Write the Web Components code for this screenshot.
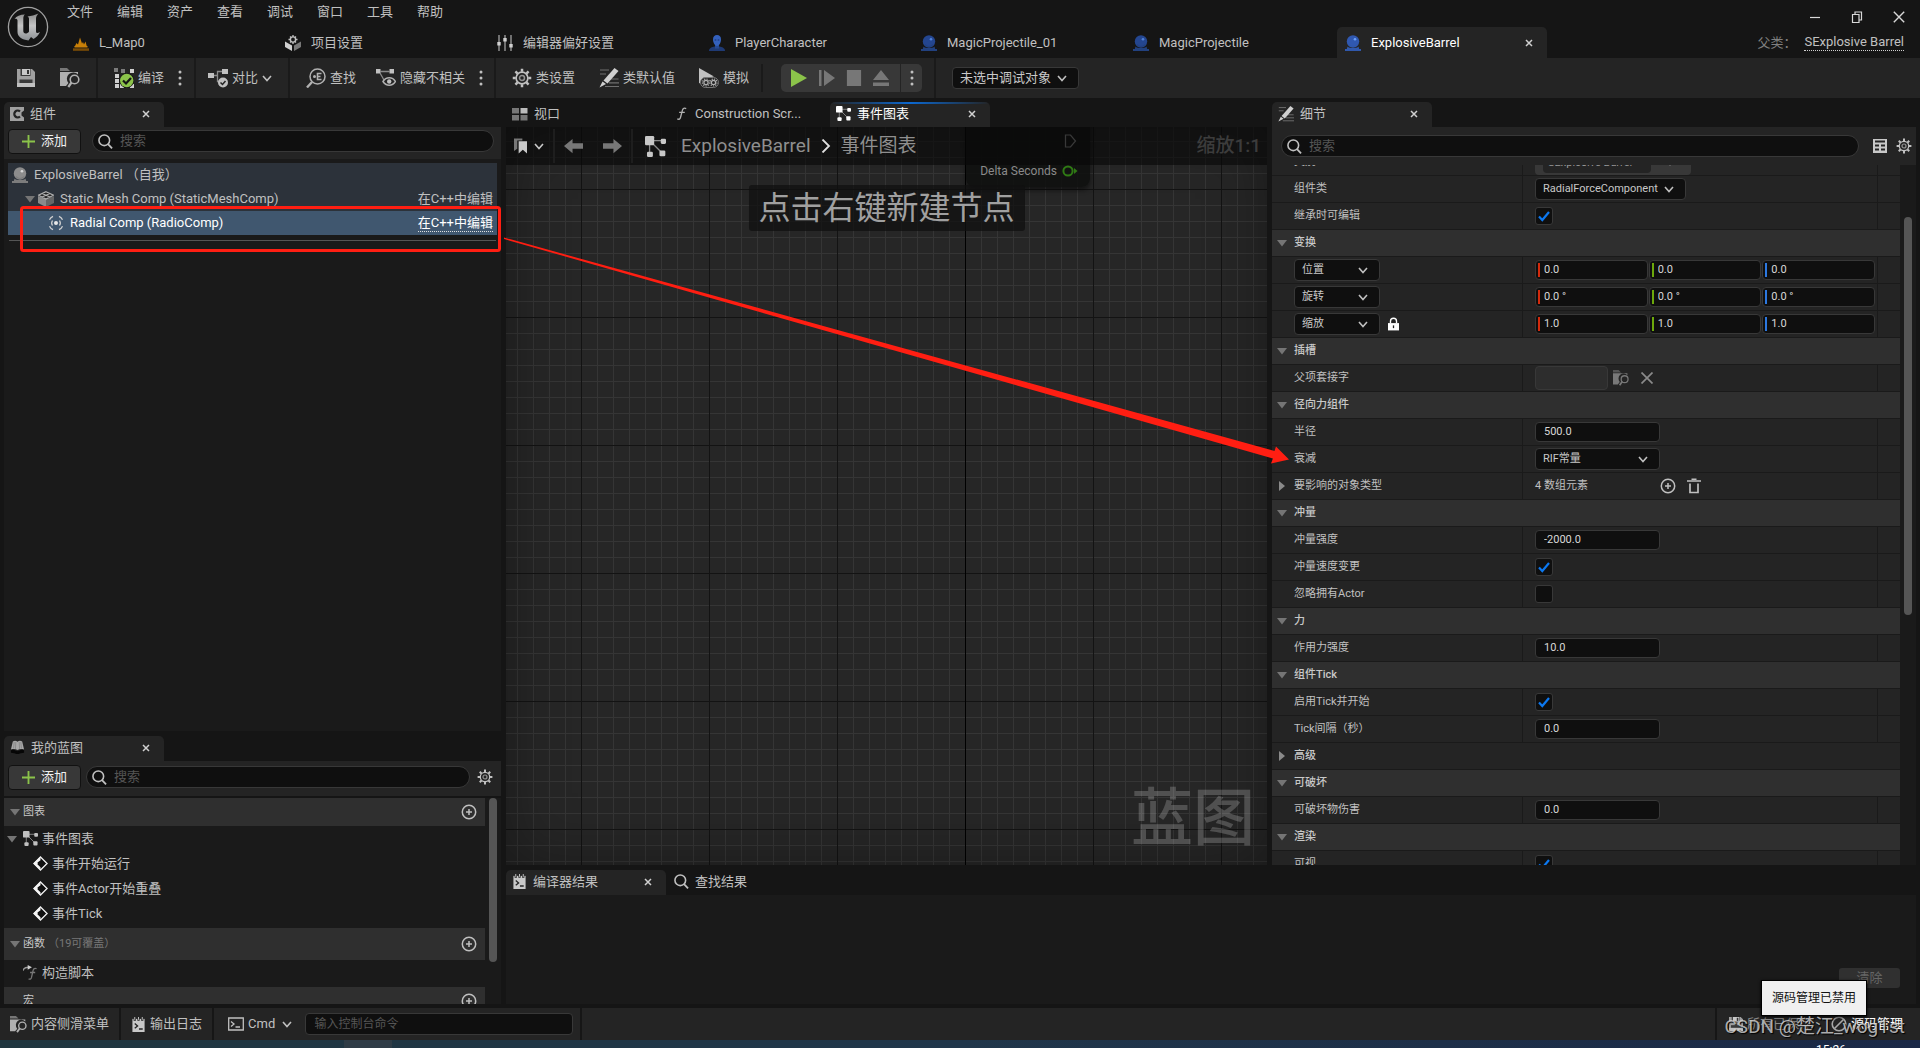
<!DOCTYPE html>
<html lang="zh-CN">
<head>
<meta charset="utf-8">
<title>ExplosiveBarrel</title>
<style>
html,body{margin:0;height:100%}
body{background:#151515;color:#c0c0c0;font:13px/20px Roboto,"Noto Sans CJK SC",sans-serif;overflow:hidden}
</style>
</head>
<body>
<ue-editor></ue-editor>
<script>
const BASE = `*{box-sizing:border-box}
:host{display:block;box-sizing:border-box}
:host([hidden]){display:none}
button,input,select{font:inherit;color:inherit;margin:0;padding:0;border:0;background:none;border-radius:0;outline:0;text-align:left}
button{display:inline-flex;align-items:center;white-space:nowrap}
a{color:inherit;text-decoration:none}
ue-icon{flex:none}`;

const gear = (c='currentColor') => `<g fill="none" stroke="${c}"><circle cx="8" cy="8" r="4.7" stroke-width="1.3"/><circle cx="8" cy="8" r="2" stroke-width="1.2" opacity=".7"/><g stroke-width="2">${[0,45,90,135,180,225,270,315].map(a=>`<path d="M8 .6V3" transform="rotate(${a} 8 8)"/>`).join('')}</g></g>`;
const orb = (a,b,c) => `<path d="M2.500 11.500C4 13.500 12 13.500 13.500 11.500l.8 3H1.700z" fill="${a}"/><path d="M0 14h16v2H0z" fill="${a}"/><circle cx="8" cy="6.500" r="6.200" fill="${b}"/><path d="M4 9.500a5 5 0 0 0 8 0" fill="none" stroke="${a}" stroke-width="1.200"/><circle cx="10" cy="4.300" r="1.300" fill="${c}"/>`;
const ICONS = {
  logo:['0 0 42 42','<defs><linearGradient id="m" x1="0" y1="0" x2="0" y2="1"><stop offset="0" stop-color="#8c8c8c"/><stop offset=".45" stop-color="#c4c4c4"/><stop offset="1" stop-color="#8c9094"/></linearGradient></defs><circle cx="21" cy="21" r="19.600" fill="#141414" stroke="#a0a0a0" stroke-width="1.300"/><path d="M7.500 13C9.500 10 13 8.500 18 8.500 16.500 9.500 16.300 11 16.300 13V25c0 2 1.700 3.300 4.200 2 1-.5 1.500-1 1.500-2V13c0-1.500-.5-2-1.500-2.500C24 10 28 9 31.500 7.500 29.500 9.500 29 11 29 13V25c0 2.500 1.500 2.500 4 1-1.500 3.500-4 5.500-6.500 7L24 31l-2.500 3.500C15 33.500 10.500 31 10.500 26V14.500C10.500 13 9 12.500 7.500 13z" fill="url(#m)"/>'],
  map:['0 0 16 16','<path d="M1.500 12L3.500 8l1.500 1.500L7 2.500l2 6 1-1.500 1 2.500 1.500-3L14 12z" fill="#c98008"/><path d="M1.500 11h13v1.500h-13z" fill="#c98008"/><path d="M0 13.300h16V15.800H0z" fill="#7a4c06"/>'],
  project:['0 0 16 16','<path d="M0 6.500l7 4V16L0 12z" fill="#d0d0d0"/><path d="M16 6.500l-7 4V16l7-4z" fill="#777"/><circle cx="8" cy="4.500" r="2.600" fill="none" stroke="#c0c0c0" stroke-width="1.400"/><path d="M8 0v2M8 7v2M3.500 4.500h2M10.500 4.500h2M5 1.500l1 1M11 1.500l-1 1M5 7.500l1-1M11 7.500l-1-1" stroke="#c0c0c0" stroke-width="1.300"/>'],
  sliders:['0 0 16 16','<path d="M2 0v16M8 0v16M14 0v16" stroke="#a0a0a0" stroke-width="1.300"/><path d="M.3 7h3.400v3.500H.3zM6.300 3h3.400v3.500H6.300zM12.300 9h3.400v3.500h-3.400z" fill="#d0d0d0"/>'],
  person:['0 0 16 16','<path d="M0 16c0-3 3-4 5.500-4.500h5C13 12 16 13 16 16z" fill="#1f3a74"/><path d="M6 9h4v4.500H6z" fill="#264a95"/><path d="M4 4.500C4 1.500 5.500 0 8 0s4 1.500 4 4.500S10 11 8 11 4 7.500 4 4.500z" fill="#3461bd"/><path d="M5.700 5h1.600M8.700 5h1.600" stroke="#16306a" stroke-width="1"/>'],
  orb:['0 0 16 16',orb('#22417f','#244690','#4f7fd6')],
  orbOn:['0 0 16 16',orb('#3058ac','#3058b0','#6c9ff8')],
  orbGray:['0 0 16 16',orb('#7c7c7c','#8c8c8c','#d8d8d8')],
  save:['0 0 18 18','<path d="M0 0h15l3 3v15H0z" fill="#a0a0a0"/><path d="M3.500 0h10v7h-10z" fill="#3a3a3a"/><path d="M5 0h8v6H5z" fill="#c8c8c8"/><path d="M10 1h2v4h-2z" fill="#333"/><path d="M2.500 10.500h13v3.500h-13z" fill="#3a3a3a"/><path d="M0 14h18v4H0z" fill="#c0c0c0"/>'],
  browse:['0 0 20 20','<path d="M0 0h7l3 3H0z" fill="#777"/><path d="M0 4h18v2.500a6 6 0 0 0-9.500 8.500l-2.500 3H0z" fill="#b0b0b0"/><circle cx="14.500" cy="11.500" r="4.300" fill="#242424" stroke="#b0b0b0" stroke-width="1.600"/><path d="M11.500 14.500L8.300 19" stroke="#b0b0b0" stroke-width="2.200"/>'],
  compile:['0 0 20 20','<g fill="#7b7b7b"><path d="M0 0h4v4H0zM7 1h4v4H7z"/></g><g fill="#cfcfcf"><path d="M16 1h4v4h-4zM1 6h4v4H1zM1 11h4v4H1zM1 16h4v4H1zM6 16h4v4H6zM16 16h4v4h-4z"/></g><circle cx="12.700" cy="12.500" r="7.400" fill="#151515"/><circle cx="12.700" cy="12.500" r="6.700" fill="#8bc34a"/><path d="M9 12.500l3 3 5-5.500" fill="none" stroke="#151515" stroke-width="2.200"/>'],
  diff:['0 0 20 20','<path d="M0 5h6v5H0zM14 1h6v5h-6z" fill="#c0c0c0"/><path d="M6 7.500h3.500V3.500H14M9.500 7.500v6H11" fill="none" stroke="#8a8a8a" stroke-width="1.300"/><circle cx="15" cy="14.500" r="5" fill="#c0c0c0"/><path d="M12.500 14.500l2 2 3-3.500" fill="none" stroke="#242424" stroke-width="1.500"/>'],
  find:['0 0 20 20','<circle cx="11.500" cy="8.500" r="7.500" fill="none" stroke="#b0b0b0" stroke-width="1.500"/><path d="M6 14L1 19.500" stroke="#b0b0b0" stroke-width="2.400"/><circle cx="8.500" cy="8.500" r="1.500" fill="#b0b0b0"/><path d="M15.500 5.500h-4v6h4M11.500 8.500h3" fill="none" stroke="#b0b0b0" stroke-width="1.600"/>'],
  hide:['0 0 20 20','<path d="M0 1h4.500v4.500H0zM13.500 1H18v4.500h-4.500z" fill="#c0c0c0"/><path d="M4 3.500h10M4 5l4 7" stroke="#8a8a8a" stroke-width="1.300"/><path d="M7 13.500c3-5 9.500-5 12.500 0-3 5-9.500 5-12.500 0z" fill="#242424" stroke="#b0b0b0" stroke-width="1.500"/><circle cx="13.200" cy="13.500" r="2.200" fill="#c0c0c0"/>'],
  gear:['0 0 16 16',gear('#c0c0c0')],
  pen:['0 0 20 20','<path d="M1 2h9M1 6h6M11.500 11h8M10 14.800h10M6 18.500h14" stroke="#6f6f6f" stroke-width="1.200"/><path d="M15.500 0l4 3L8.500 15.500 4.500 12.500z" fill="#d0d0d0"/><path d="M3.500 13.500L7 16 .5 19.500z" fill="#d0d0d0"/>'],
  simulate:['0 0 20 20','<path d="M0 0l15 8.500-5 1L0 15.500z" fill="#c0c0c0"/><rect x="1.500" y="9.500" width="18" height="10" rx="5" fill="#242424" stroke="#777"/><g fill="none" stroke="#b0b0b0" stroke-width="1.200"><circle cx="7" cy="14.500" r="2.100"/><circle cx="14.500" cy="14.500" r="2.100"/><path stroke-dasharray="1.200 1.200" d="M3.500 14.500a3.500 3.500 0 1 0 7 0 3.500 3.500 0 1 0-7 0M11 14.500a3.500 3.500 0 1 0 7 0 3.500 3.500 0 1 0-7 0"/></g>'],
  play:['0 0 18 18','<path d="M1 0l16 9L1 18z" fill="#8bc34a"/>'],
  step:['0 0 18 18','<path d="M1 1h2.500v16H1zM6 1l11 8L6 17z" fill="#777"/>'],
  stop:['0 0 18 18','<path d="M1 0h16v18H1z" fill="#777"/>'],
  eject:['0 0 18 18','<path d="M9 1l8 10H1zM1 13.500h16V17H1z" fill="#777"/>'],
  dots:['0 0 4 18','<g fill="currentColor"><circle cx="2" cy="3" r="1.500"/><circle cx="2" cy="9" r="1.500"/><circle cx="2" cy="15" r="1.500"/></g>'],
  chevron:['0 0 10 10','<path d="M1 3l4 4.500L9 3" fill="none" stroke="currentColor" stroke-width="1.600"/>'],
  close:['0 0 8 8','<path d="M1 1l6 6M7 1L1 7" stroke="currentColor" stroke-width="1.500"/>'],
  comp:['0 0 14 14','<path d="M0 0h14v3.500l-2.500 2v3l2.500 2V14H0z" fill="#a0a0a0"/><path d="M10 4.500A3.400 3.400 0 1 0 10 9.500" fill="none" stroke="#222" stroke-width="2.200"/>'],
  plus:['0 0 14 14','<path d="M7 0v14M0 7h14" stroke="#8bc34a" stroke-width="2"/>'],
  search:['0 0 16 16','<circle cx="6.700" cy="6.700" r="5.700" fill="none" stroke="#c0c0c0" stroke-width="1.700"/><path d="M10.700 10.700L15 15.300" stroke="#c0c0c0" stroke-width="1.900"/>'],
  mesh:['0 0 16 16','<path d="M0 5l8 3v8l-8-4z" fill="#8a8a8a"/><path d="M16 5L8 8v8l8-4z" fill="#666"/><path d="M8 .7l7.500 3.500L8 8 .5 4.200zM4 2.500L12 6M12 2.500L4 6" fill="#222" stroke="#b0b0b0" stroke-width="1.200"/>'],
  radial:['0 0 16 16','<circle cx="8" cy="8" r="2" fill="#e8e8e8"/><g fill="none" stroke="#d0d0d0" stroke-width="1.300"><path d="M4.500 5.500a4.500 4.500 0 0 0 0 5M11.500 5.500a4.500 4.500 0 0 1 0 5"/><path d="M5 1.300a7.300 7.300 0 0 0-3.500 3.500M1.500 11.200A7.300 7.300 0 0 0 5 14.700M11 1.300a7.300 7.300 0 0 1 3.500 3.500M14.500 11.200a7.300 7.300 0 0 1-3.500 3.500"/></g>'],
  down:['0 0 10 10','<path d="M0 2h10L5 8.500z" fill="#757575"/>'],
  right:['0 0 10 10','<path d="M2 0l6 5-6 5z" fill="#8a8a8a"/>'],
  viewport:['0 0 16 14','<path d="M0 1h7v5.500H0zM0 8h7v5.500H0zM8.500 8h7v5.500h-7z" fill="#777"/><path d="M8.500 1h7v5.500h-7z" fill="#bbb"/>'],
  func:['0 0 14 16','<path d="M12 2.800c-2-1.200-3.400-.3-4 1.600L6 12c-.5 2-1.700 2.600-3.500 1.700M4.500 6.700h6" fill="none" stroke="#b0b0b0" stroke-width="1.400"/>'],
  funcOver:['0 0 16 16','<path d="M14.500 4c-2-.8-3.200 0-3.700 1.800L9 13.500c-.5 1.700-1.700 2-3 1.300M7.500 8h5.500" fill="none" stroke="#777" stroke-width="1.400"/><path d="M0 6C.5 3.500 2.500 2.300 6 2.300" fill="none" stroke="#999" stroke-width="1.600"/><path d="M5 0l4.500 2.500L5 5z" fill="#d0d0d0"/>'],
  graph:['0 0 16 16','<path d="M4 3.500h9M3.500 5v8M5 5l8 8" stroke="#8a8a8a" stroke-width="1"/><g fill="currentColor"><rect width="7" height="7" rx="1"/><rect x="12" y="2" width="4" height="4" rx="1"/><rect x="1.500" y="12" width="4.500" height="4" rx="1"/><rect x="11" y="11" width="4.500" height="4.500" rx="1"/></g>'],
  bookmark:['0 0 14 16','<path d="M0 0h9v2H3.500v9L0 13.500z" fill="#777"/><path d="M5 3h9v13l-4.500-4L5 16z" fill="#c8c8c8"/>'],
  back:['0 0 20 16','<path d="M0 8l9-7.500V5H20v6H9v4.500z" fill="#777"/>'],
  fwd:['0 0 20 16','<path d="M20 8l-9-7.500V5H0v6h11v4.500z" fill="#777"/>'],
  crumb:['0 0 10 14','<path d="M1.500.5L8 7l-6.500 6.500" fill="none" stroke="#e0e0e0" stroke-width="1.800"/>'],
  exec:['0 0 14 14','<path d="M1.500 1h5L11.500 7l-5 6h-5z" fill="none" stroke="#8a8a8a" stroke-width="1.200"/>'],
  pin:['0 0 16 12','<circle cx="6" cy="6" r="4.600" fill="none" stroke="#2f7a14" stroke-width="2"/><path d="M12 3l3.500 3L12 9z" fill="#2f7a14"/>'],
  book:['0 0 16 16','<path d="M1 10L3 1.500C5 .5 6.500.7 8 1.800c1.500-1.100 3-1.300 5-.3L15 10c-2.500-.8-5-.6-7 .7-2-1.300-4.500-1.500-7-.7z" fill="#a8a8a8"/><path d="M1 11c3-1 5 0 7 1 2-1 4-2 7-1v2.500c-3 .5-4 .3-5.500 1.500h-3C5 13.800 4 14 1 13.500z" fill="#060606"/><path d="M4.500 2l-.7 7M6.200 2l-.4 7.500M9.800 2l.4 7.500M11.500 2l.7 7" stroke="#888"/>'],
  add:['0 0 16 16','<circle cx="8" cy="8" r="6.700" fill="none" stroke="#c0c0c0" stroke-width="1.500"/><path d="M8 5v6M5 8h6" stroke="#c0c0c0" stroke-width="1.500"/>'],
  trash:['0 0 16 16','<path d="M1 3h14M5.500 1.200h5" stroke="#c0c0c0" stroke-width="1.600"/><path d="M4 5.500v9h8v-9" fill="none" stroke="#c0c0c0" stroke-width="1.700"/>'],
  event:['0 0 16 16','<path d="M8 1l7 7-7 7-7-7z" fill="#111" stroke="#f0f0f0" stroke-width="1.400"/><path d="M8 .5L.5 8 8 15.500V12L5.500 9.500v-3L8 4.500z" fill="#f4f4f4"/><path d="M5 6.500h4V4l4 4-4 4V9.500H5z" fill="#111"/>'],
  log:['0 0 13 16','<path d="M0 2h13v14H0z" fill="#c8c8c8"/><path d="M2.500 0v4M6.500 0v4M10.500 0v4" stroke="#242424" stroke-width="2.400"/><path d="M2.500 0v3M6.500 0v3M10.500 0v3" stroke="#c8c8c8"/><path d="M2.500 7L5.500 9.500l-3 2.500M7 12.800h4" fill="none" stroke="#242424" stroke-width="1.400"/>'],
  cmd:['0 0 16 14','<path d="M.7 1h14.600v12H.7z" fill="none" stroke="#c0c0c0" stroke-width="1.300"/><path d="M3 4.500L6 7l-3 2.500M7.500 10h4.500" fill="none" stroke="#c0c0c0" stroke-width="1.300"/>'],
  blocked:['0 0 16 16','<circle cx="8" cy="8" r="6.800" fill="none" stroke="#a8a8a8" stroke-width="1.600"/><path d="M3.500 12.500l9-9" stroke="#a8a8a8" stroke-width="1.600"/>'],
  table:['0 0 14 14','<path d="M0 0h14v14H0z" fill="#c8c8c8"/><path d="M2 2.500h10M2 6.500h4M8 6.500h4M2 10.500h4M8 10.500h4" stroke="#242424" stroke-width="2.200"/>'],
  lock:['0 0 12 14','<path d="M0 6h12v8H0z" fill="#fff"/><path d="M2.700 6V4a3.300 3.300 0 0 1 6.600 0v2" fill="none" stroke="#fff" stroke-width="1.500"/><path d="M6 8.500v3" stroke="#222" stroke-width="1.400"/>'],
  ex:['0 0 12 12','<path d="M.5.5l11 11M11.500.5l-11 11" stroke="#8a8a8a" stroke-width="1.700"/>'],
  check:['0 0 16 16','<path d="M3 8.500l3.300 3.500L13 4" fill="none" stroke="#0c78f0" stroke-width="2.200"/>'],
  min:['0 0 12 12','<path d="M1 6.500h10" stroke="#d8d8d8" stroke-width="1.200"/>'],
  restore:['0 0 12 12','<path d="M1.500 3.500h6.500v8H1.500zM4 3.500v-2.500h6.500V9H8" fill="none" stroke="#d8d8d8" stroke-width="1.200"/>'],
  quit:['0 0 12 12','<path d="M.8.8l10.400 10.400M11.200.8L.8 11.200" stroke="#d8d8d8" stroke-width="1.400"/>']
};

class UeElement extends HTMLElement{
  constructor(){super();this.attachShadow({mode:'open'});}
  connectedCallback(){
    if(this.done)return;this.done=true;
    this.shadowRoot.innerHTML=`<style>${BASE}${this.css()}</style>${this.html()}`;
  }
  attr(n,d=''){return this.hasAttribute(n)?this.getAttribute(n):d;}
  css(){return '';} html(){return '<slot></slot>';}
}
const define=(n,c)=>customElements.define(n,c);

define('ue-icon',class extends UeElement{
  css(){return `:host{display:inline-block;width:${this.attr('w','16')}px;height:${this.attr('h',this.attr('w','16'))}px;pointer-events:none}svg{display:block;width:100%;height:100%}`;}
  html(){const [v,b]=ICONS[this.attr('name')];return `<svg viewBox="${v}" aria-hidden="true">${b}</svg>`;}
});

/* Dock tab: icon, caption and an optional close button. */
define('ue-tab',class extends UeElement{
  css(){return `:host{display:flex;align-items:center;flex:0 1 160px;min-width:0;height:25px;padding:0 14px 2px 6px;border-radius:5px 5px 0 0;color:#c0c0c0}
  :host([big]){flex-basis:210px;height:31px;padding:0 14px 0 8px}
  :host([active]){background:#242424}
  :host([lit]){color:#fff;background:linear-gradient(90deg,#242424,#0c68d0 50%,#242424) 0 0/100% 2px no-repeat #242424}
  :host([hot]){color:#fff}
  .open{flex:1;gap:6px;min-width:0;overflow:hidden}
  :host([big]) .open{gap:10px}
  .x{color:#d0d0d0}`;}
  html(){return `<button class="open"><ue-icon name="${this.attr('icon')}" w="${this.attr('w','15')}"></ue-icon><slot></slot></button>${this.hasAttribute('closable')?'<button class="x" aria-label="关闭"><ue-icon name="close" w="8"></ue-icon></button>':''}`;}
});

define('ue-tool',class extends UeElement{
  css(){return `:host{display:flex}button{gap:4px}`;}
  html(){const i=this.attr('icon');return `<button aria-label="${this.attr('label')||this.textContent||'更多选项'}"><ue-icon name="${i}" w="${this.attr('w','20')}" h="${this.attr('h',this.attr('w','20'))}"></ue-icon><slot></slot>${this.hasAttribute('menu')?'<ue-icon name="chevron" w="10"></ue-icon>':''}</button>`;}
});

define('ue-add',class extends UeElement{
  css(){return `:host{flex:none}button{width:73px;height:25px;justify-content:center;gap:6px;border:1px solid #111;border-radius:4px;background:#383838;color:#f0f0f0}`;}
  html(){return `<button><ue-icon name="plus" w="13"></ue-icon>添加</button>`;}
});

define('ue-search',class extends UeElement{
  css(){return `:host{flex:1;min-width:0}label{display:flex;align-items:center;gap:7px;height:22px;padding:0 8px 0 5px;border:1px solid #383838;border-radius:11px;background:#0f0f0f}input{flex:1;min-width:0;line-height:20px}input::placeholder{color:#555;opacity:1}`;}
  html(){return `<label><ue-icon name="search" w="15"></ue-icon><input type="search" placeholder="搜索" aria-label="搜索"></label>`;}
});

define('ue-select',class extends UeElement{
  css(){return `:host{display:grid;width:var(--w,125px);height:22px;align-items:center;flex:none}
  select,ue-icon{grid-area:1/1}
  select{appearance:none;width:100%;height:22px;padding:0 22px 0 7px;border:1px solid #383838;border-radius:4px;background:#0f0f0f;color:#c8c8c8}
  ue-icon{justify-self:end;margin-right:12px}`;}
  html(){return `<select aria-label="${this.attr('label')}"><option>${this.attr('value')}</option></select><ue-icon name="chevron" w="10"></ue-icon>`;}
});

/* Category header of the details panel. */
define('ue-section',class extends UeElement{
  css(){return `:host{height:27px;background:#2f2f2f;border-bottom:1px solid #1a1a1a;font-size:11px}
  :host([plain]){background:#242424}
  button{height:26px;width:100%;padding-left:5px;gap:7px;font-weight:500;color:#c8c8c8}`;}
  html(){return `<button><ue-icon name="${this.hasAttribute('plain')?'right':'down'}" w="10"></ue-icon><slot></slot></button>`;}
});

/* One property row: name, value control and the reset column. */
define('ue-prop',class extends UeElement{
  css(){return `:host{display:grid;grid-template-columns:251px minmax(0,1fr) 23px;height:27px;border-bottom:1px solid #1a1a1a;background:#242424;font-size:11px}
  .name,.value{display:flex;align-items:center;min-width:0}
  .name{padding-left:22px;border-right:1px solid #1a1a1a;gap:8px}
  .name.open{padding-left:5px;gap:7px}
  .value{padding:0 2px 0 12px}
  .reset{border-left:1px solid #1a1a1a}
  .num{width:125px;height:20px;padding:0 8px;border:1px solid #383838;border-radius:4px;background:#0f0f0f;color:#d8d8d8}
  .vec{display:flex;flex:1;gap:1px;min-width:0}
  .axis{display:flex;flex:1 1 0;align-items:center;height:20px;padding-left:2px;border:1px solid #383838;border-radius:4px;background:#0f0f0f;min-width:0}
  .axis i{width:2px;height:14px;background:var(--c)}
  .axis input{flex:1 1 0;width:0;min-width:0;height:18px;padding-left:4px;color:#d8d8d8}
  .box{display:grid;place-items:center;width:18px;height:18px}
  .box>*{grid-area:1/1}
  .box input{appearance:none;width:18px;height:18px;border:1px solid #383838;border-radius:3px;background:#0f0f0f}
  .box input:not(:checked)+ue-icon{display:none}
  .socket{width:73px;height:24px;border:1px solid #383838;border-radius:4px;background:#2d2d2d}
  .faded{opacity:.6;margin:0 12px 0 5px}
  .count{width:125px}.gap{margin-right:10px}
  .cat{display:flex;align-items:center;width:156px;height:26px;border-radius:4px;background:#383838;padding:0 16px 0 8px}
  .cat input{width:108px;height:22px;margin-right:14px;padding-left:5px;border-radius:4px;background:#242424;color:#999}`;}
  html(){
    const k=this.attr('kind'),n=this.attr('name'),v=this.attr('value');
    let left=`<label for="c">${n}</label>`,right='';
    if(k==='num')right=`<input id="c" class="num" value="${v}">`;
    if(k==='check')right=`<span class="box"><input id="c" type="checkbox" ${v?'checked':''}><ue-icon name="check" w="16"></ue-icon></span>`;
    if(k==='class')right=`<ue-select label="${n}" value="${v}" style="--w:151px"></ue-select>`,left=`<span>${n}</span>`;
    if(k==='select')right=`<ue-select label="${n}" value="${v}"></ue-select>`,left=`<span>${n}</span>`;
    if(k==='vec'){
      left=`<ue-select label="变换类型" value="${n}" style="--w:86px"></ue-select>`+(this.hasAttribute('lock')?'<button aria-label="锁定比例"><ue-icon name="lock" w="11" h="14"></ue-icon></button>':'');
      right='<div class="vec">'+[['X','#d42a0c'],['Y','#6ca80c'],['Z','#2c78e0']].map(([a,c])=>`<label class="axis" style="--c:${c}"><i></i><input aria-label="${n} ${a}" value="${v}"></label>`).join('')+'</div>';
    }
    if(k==='socket')right=`<input id="c" class="socket" readonly><button class="faded" aria-label="浏览"><ue-icon name="browse" w="16"></ue-icon></button><button aria-label="清除套接字"><ue-icon name="ex" w="12"></ue-icon></button>`;
    if(k==='array'){left=`<ue-icon name="right" w="10"></ue-icon><span>${n}</span>`;right=`<span class="count">${v}</span><button class="gap" aria-label="添加元素"><ue-icon name="add" w="16"></ue-icon></button><button aria-label="清空"><ue-icon name="trash" w="16"></ue-icon></button>`;}
    if(k==='category')right=`<span class="cat"><input id="c" value="${v}"><ue-icon name="chevron" w="10"></ue-icon></span>`;
    return `<div class="name ${k==='array'?'open':''}">${left}</div><div class="value">${right}</div><div class="reset"></div>`;
  }
});

define('ue-header',class extends UeElement{
  css(){return `:host{display:flex;height:58px;flex:none}
  .logo{width:65px;padding:6px 0 0 7px;flex:none}
  .main{flex:1;min-width:0}
  .row{display:flex;justify-content:space-between}
  nav{display:flex;gap:24px;padding-left:2px;height:24px;align-items:center}
  .win button{width:42px;height:27px;justify-content:center;padding-top:7px}
  .win{display:flex}
  .tabs{display:flex;gap:2px;flex:1;min-width:0}
  .parent{display:flex;align-items:center;gap:8px;padding-right:16px;white-space:nowrap;color:#808080}
  .parent a{color:#c0c0c0;line-height:16px;border-bottom:1px dotted #d0d0d0}`;}
  html(){return `<div class="logo"><ue-icon name="logo" w="42"></ue-icon></div><div class="main">
  <div class="row"><nav>${['文件','编辑','资产','查看','调试','窗口','工具','帮助'].map(t=>`<button>${t}</button>`).join('')}</nav>
  <div class="win"><button aria-label="最小化"><ue-icon name="min" w="12"></ue-icon></button><button aria-label="还原"><ue-icon name="restore" w="12"></ue-icon></button><button aria-label="关闭窗口"><ue-icon name="quit" w="12"></ue-icon></button></div></div>
  <div class="row"><div class="tabs">
  <ue-tab big w="16" icon="map">L_Map0</ue-tab><ue-tab big w="16" icon="project">项目设置</ue-tab><ue-tab big w="16" icon="sliders">编辑器偏好设置</ue-tab><ue-tab big w="16" icon="person">PlayerCharacter</ue-tab><ue-tab big w="16" icon="orb">MagicProjectile_01</ue-tab><ue-tab big w="16" icon="orb">MagicProjectile</ue-tab><ue-tab big w="16" icon="orbOn" active hot closable>ExplosiveBarrel</ue-tab></div>
  <div class="parent"><span>父类：</span><a href="#">SExplosive Barrel</a></div></div></div>`;}
});

define('ue-toolbar',class extends UeElement{
  css(){return `:host{display:flex;height:40px;flex:none;background:#242424;align-items:stretch}
  .g{display:flex;align-items:center;padding:0 6px 0 16px;border-right:2px solid #1a1a1a}
  .files{gap:25px;padding:0 16px 0 17px}
  .diff{padding:0 16px 0 12px}
  .hide{margin:0 14px 0 20px}.comp{margin-right:14px}
  .cls{gap:24px;padding-right:12px}
  .bar{width:2px;height:28px;background:#1a1a1a;margin-left:-12px}
  .play{display:flex;align-items:center;height:28px;border-radius:5px;background:#383838;margin-left:-6px;padding-left:9px;gap:10px}
  .play .more{height:28px;display:flex;align-items:center;justify-content:center;width:22px;border-left:1px solid #242424}
  .dbg{padding-left:16px;border:0}`;}
  html(){return `<div class="g files"><ue-tool icon="save" w="18" label="保存"></ue-tool><ue-tool icon="browse" label="浏览"></ue-tool></div>
  <div class="g"><ue-tool class="comp" icon="compile">编译</ue-tool><ue-tool icon="dots" w="4" h="18"></ue-tool><span style="width:6px"></span></div>
  <div class="g diff"><ue-tool icon="diff" menu>对比</ue-tool></div>
  <div class="g"><ue-tool icon="find">查找</ue-tool><ue-tool class="hide" icon="hide">隐藏不相关</ue-tool><ue-tool icon="dots" w="4" h="18"></ue-tool><span style="width:5px"></span></div>
  <div class="g cls"><ue-tool icon="gear">类设置</ue-tool><ue-tool icon="pen">类默认值</ue-tool><ue-tool icon="simulate">模拟</ue-tool><span class="bar"></span>
  <div class="play"><ue-tool icon="play" w="18" label="播放"></ue-tool><ue-tool icon="step" w="18" label="步进"></ue-tool><ue-tool icon="stop" w="16" label="停止"></ue-tool><ue-tool icon="eject" w="18" label="弹出"></ue-tool><div class="more"><ue-tool icon="dots" w="4" h="18"></ue-tool></div></div></div>
  <div class="g dbg"><ue-select label="调试对象" value="未选中调试对象" style="--w:127px"></ue-select></div>`;}
});

define('ue-tree-row',class extends UeElement{
  css(){return `:host{display:flex;align-items:center;height:24px;background:#2c323a;padding:0 4px 0 var(--i,4px);gap:6px}
  :host([selected]){background:#40576f;color:#fff}
  .t{flex:1}a{line-height:16px;border-bottom:1px dotted #e0e0e0;white-space:nowrap}ue-icon[name=down]{margin-right:-3px}`;}
  html(){return `${this.hasAttribute('open')?'<ue-icon name="down" w="10"></ue-icon>':''}<ue-icon name="${this.attr('icon')}"></ue-icon><span class="t"><slot></slot></span>${this.hasAttribute('cpp')?'<a href="#">在C++中编辑</a>':''}`;}
});

define('ue-components',class extends UeElement{
  css(){return `:host{display:flex;flex-direction:column;flex:1;min-height:0}
  .tabs{display:flex;height:29px;padding-top:4px;flex:none}
  .bar{display:flex;gap:11px;align-items:center;height:32px;padding:0 7px 4px 4px;background:#242424;flex:none}
  .tree{flex:1;min-height:0;background:#1a1a1a;padding:4px}
  hr{margin:5px 1px;border:0;border-top:1px solid #555}`;}
  html(){return `<div class="tabs"><ue-tab icon="comp" w="14" active closable>组件</ue-tab></div>
  <div class="bar"><ue-add></ue-add><ue-search></ue-search></div>
  <div class="tree"><ue-tree-row icon="orbGray">ExplosiveBarrel （自我）</ue-tree-row>
  <ue-tree-row icon="mesh" open cpp style="--i:17px">Static Mesh Comp (StaticMeshComp)</ue-tree-row>
  <ue-tree-row icon="radial" selected cpp style="--i:40px">Radial Comp (RadioComp)</ue-tree-row><hr></div>`;}
});

define('ue-my-blueprint',class extends UeElement{
  css(){return `:host{height:268px;flex:none;display:flex;flex-direction:column}
  .tabs{display:flex;flex:none}
  .bar{display:flex;gap:5px;align-items:center;height:35px;padding:0 8px 3px 4px;background:#242424;flex:none;margin-bottom:2px}
  .bar ue-search{margin-right:2px}
  .body{display:flex;flex:1;min-height:0;background:#1a1a1a;overflow:hidden}
  .list{flex:1;overflow:hidden}
  .thumb{width:8px;height:164px;border-radius:4px;background:#555;margin:0 4px}
  .h{display:flex;align-items:center;height:28px;padding:0 8px 0 6px;background:#2f2f2f;font-size:11px;color:#c8c8c8}
  .h.tall{height:32px;margin-top:2px}
  .h button:first-child{gap:3px;flex:1}
  .dim{color:#777}
  .r{display:flex;align-items:center;height:25px;gap:4px;padding-left:29px}
  .r.top{padding-left:3px}.r.top ue-icon:first-child{margin-right:2px}
  .r.fn{height:27px;padding:0 0 2px 19px}
  .sp{width:10px}`;}
  html(){const add='<button aria-label="添加"><ue-icon name="add" w="16"></ue-icon></button>';
  const ev=t=>`<div class="r"><ue-icon name="event" w="15"></ue-icon>${t}</div>`;
  return `<div class="tabs"><ue-tab icon="book" w="15" active closable>我的蓝图</ue-tab></div>
  <div class="bar"><ue-add></ue-add><ue-search></ue-search><ue-tool icon="gear" w="16" label="设置"></ue-tool></div>
  <div class="body"><div class="list">
  <div class="h"><button><ue-icon name="down" w="10"></ue-icon>图表</button>${add}</div>
  <div class="r top"><ue-icon name="down" w="10"></ue-icon><ue-icon name="graph" w="15"></ue-icon>事件图表</div>
  ${ev('事件开始运行')}${ev('事件Actor开始重叠')}${ev('事件Tick')}
  <div class="h tall"><button><ue-icon name="down" w="10"></ue-icon>函数<span class="dim">（19可覆盖）</span></button>${add}</div>
  <div class="r fn"><ue-icon name="funcOver" w="15"></ue-icon>构造脚本</div>
  <div class="h"><button><span class="sp"></span>宏</button>${add}</div>
  </div><div class="thumb"></div></div>`;}
});

define('ue-graph',class extends UeElement{
  css(){return `:host{display:flex;flex-direction:column;flex:1;min-width:0}
  .tabs{display:flex;gap:2px;height:29px;padding-top:4px;flex:none}
  .canvas{position:relative;flex:1;min-height:0;overflow:hidden;background:#262626}
  .grid{position:absolute;inset:0;width:100%;height:100%}
  .shade{position:absolute;inset:0;box-shadow:inset 0 0 60px rgba(0,0,0,.35)}
  .node{position:absolute;left:460px;top:-40px;width:124px;height:100px;border-radius:0 0 8px 8px;background:rgba(15,17,15,.9);box-shadow:0 3px 5px rgba(0,0,0,.5);color:#8a8a8a;font-size:12px}
  .node .p{display:flex;justify-content:flex-end;align-items:center;gap:5px;padding-right:12px}
  .node .p:first-child{height:40px;margin-top:34px}
  .node .p:last-child{height:20px}
  .bar{position:absolute;left:0;right:0;top:0;height:38px;display:flex;align-items:center;background:rgba(8,8,8,.62);font-size:19px;line-height:24px;color:#8f8f8f;padding-left:8px}
  .bar i{width:2px;height:34px;background:#1e1e1e;margin:0 9px}
  .bk{gap:7px;color:#c8c8c8}
  .arr{gap:20px}.arr,.crumbs{display:flex;align-items:center}
  .crumbs{gap:10px;padding-left:3px;color:#8f8f8f}.crumbs ue-icon:first-child{margin-right:5px;color:#c8c8c8}
  .zoom{margin-left:auto;padding-right:6px;color:#3c3c3c;font-weight:500}
  .hint{position:absolute;left:50%;top:58px;transform:translateX(-50%);height:46px;padding:0 10px;border-radius:3px;background:rgba(16,16,16,.75);color:#a0a0a0;font-size:32px;line-height:46px;white-space:nowrap}
  .mark{position:absolute;right:12px;bottom:8px;font-size:62px;line-height:76px;font-weight:500;color:rgba(255,255,255,.2)}`;}
  html(){return `<div class="tabs"><ue-tab icon="viewport" w="16">视口</ue-tab><ue-tab icon="func" w="15">Construction Scr...</ue-tab><ue-tab icon="graph" w="15" lit closable>事件图表</ue-tab></div>
  <div class="canvas"><svg class="grid" aria-hidden="true"><defs><pattern id="a" width="16" height="16" patternUnits="userSpaceOnUse" x="11" y="14"><path d="M.5 0v16M0 .5h16" stroke="#353535"/></pattern><pattern id="b" width="128" height="128" patternUnits="userSpaceOnUse" x="75" y="62"><path d="M.5 0v128M0 .5h128" stroke="#131313"/></pattern></defs><rect width="100%" height="100%" fill="url(#a)"/><rect width="100%" height="100%" fill="url(#b)"/><path d="M459.500 0v2000" stroke="#000"/></svg><div class="shade"></div>
  <div class="node"><div class="p"><ue-icon name="exec" w="14"></ue-icon></div><div class="p">Delta Seconds<ue-icon name="pin" w="16" h="12"></ue-icon></div></div>
  <div class="bar"><button class="bk" aria-label="书签"><ue-icon name="bookmark" w="13" h="16"></ue-icon><ue-icon name="chevron" w="10"></ue-icon></button><i></i>
  <div class="arr"><button aria-label="后退"><ue-icon name="back" w="19" h="16"></ue-icon></button><button aria-label="前进"><ue-icon name="fwd" w="19" h="16"></ue-icon></button></div><i></i>
  <div class="crumbs"><ue-icon name="graph" w="21"></ue-icon><button>ExplosiveBarrel</button><ue-icon name="crumb" w="10" h="14"></ue-icon><button>事件图表</button></div><span class="zoom">缩放1:1</span></div>
  <div class="hint">点击右键新建节点</div><div class="mark">蓝图</div></div>`;}
});

define('ue-details',class extends UeElement{
  css(){return `:host{display:flex;flex-direction:column;width:644px;flex:none}
  .tabs{display:flex;height:29px;padding-top:4px;flex:none}
  .bar{display:flex;align-items:center;gap:9px;height:38px;padding:0 4px 0 9px;background:#242424;flex:none}
  .bar ue-search{margin-right:5px}
  .body{display:flex;flex:1;min-height:0;background:#1a1a1a}
  .list{flex:1;overflow:hidden;min-width:0}
  .list ue-prop:first-child{margin-top:-16px}
  .thumb{width:8px;height:398px;border-radius:4px;background:#555;margin:52px 4px 0}`;}
  html(){const p=(k,n,v,x='')=>`<ue-prop kind="${k}" name="${n}" value="${v}" ${x}></ue-prop>`,s=(n,x='')=>`<ue-section ${x}>${n}</ue-section>`;
  return `<div class="tabs"><ue-tab icon="pen" w="16" active closable>细节</ue-tab></div>
  <div class="bar"><ue-search></ue-search><ue-tool icon="table" w="14" label="表格"></ue-tool><ue-tool icon="gear" w="16" label="设置"></ue-tool></div>
  <div class="body"><div class="list">${p('category','类别','SExplosive Barrel')}${p('class','组件类','RadialForceComponent')}${p('check','继承时可编辑','1')}
  ${s('变换')}${p('vec','位置','0.0')}${p('vec','旋转','0.0 °')}${p('vec','缩放','1.0','lock')}
  ${s('插槽')}${p('socket','父项套接字','')}
  ${s('径向力组件')}${p('num','半径','500.0')}${p('select','衰减','RIF常量')}${p('array','要影响的对象类型','4 数组元素')}
  ${s('冲量')}${p('num','冲量强度','-2000.0')}${p('check','冲量速度变更','1')}${p('check','忽略拥有Actor','')}
  ${s('力')}${p('num','作用力强度','10.0')}
  ${s('组件Tick')}${p('check','启用Tick并开始','1')}${p('num','Tick间隔（秒）','0.0')}${s('高级','plain')}
  ${s('可破坏')}${p('num','可破坏物伤害','0.0')}
  ${s('渲染')}${p('check','可视','1')}</div><div class="thumb"></div></div>`;}
});

define('ue-results',class extends UeElement{
  css(){return `:host{display:flex;flex-direction:column;height:134px;flex:none}
  .tabs{display:flex;gap:2px}
  .body{flex:1;display:flex;justify-content:flex-end;align-items:flex-end;padding:16px;background:#1a1a1a}
  .body button{width:61px;height:20px;justify-content:center;border-radius:3px;background:#303030;color:#666}`;}
  html(){return `<div class="tabs"><ue-tab icon="log" w="15" active closable>编译器结果</ue-tab><ue-tab icon="search" w="15">查找结果</ue-tab></div><div class="body"><button disabled>清除</button></div>`;}
});

define('ue-status',class extends UeElement{
  css(){return `:host{display:flex;height:32px;flex:none;background:#242424;position:relative}
  .g{display:flex;align-items:center;padding:0 10px;border-right:2px solid #161616}
  .grow{flex:1}
  .cmd{padding:0 7px 0 14px;gap:13px}
  .cmd input{width:268px;height:22px;padding:0 8px;border:1px solid #383838;border-radius:4px;background:#0f0f0f;font-size:12px}
  input::placeholder{color:#555;opacity:1}
  .src{gap:19px;border:0;padding:0 17px 0 12px}
  .all{color:#8a8a8a}.on{color:#fff}
  .tip{position:absolute;right:53px;bottom:24px;padding:8px 10px;border:1px solid #000;background:#f0f0f0;color:#111;font-size:12px;line-height:18px;box-shadow:0 1px 3px #000}
  .mark{position:absolute;right:15px;top:5px;font-size:19px;line-height:28px;color:rgba(215,215,215,.8);text-shadow:1px 1px 1px #000;white-space:nowrap}`;}
  html(){return `<div class="g"><ue-tool icon="browse" w="17">内容侧滑菜单</ue-tool></div><div class="g"><ue-tool icon="log" w="15">输出日志</ue-tool></div>
  <div class="g cmd"><ue-tool icon="cmd" w="16" h="14" menu>Cmd&nbsp;</ue-tool><input placeholder="输入控制台命令" aria-label="控制台命令"></div><div class="g grow"></div>
  <div class="g src"><ue-tool class="all" icon="save" w="14">所有已保存</ue-tool><ue-tool class="on" icon="blocked" w="16">源码管理</ue-tool></div>
  <div class="tip" role="tooltip">源码管理已禁用</div><div class="mark">CSDN @楚江_wog1st</div>`;}
});

define('ue-editor',class extends UeElement{
  css(){return `:host{display:flex;flex-direction:column;height:100vh;position:relative;overflow:hidden}
  main{display:flex;flex:1;min-height:0;gap:5px;padding:0 4px;margin-bottom:4px}
  .left{display:flex;flex-direction:column;gap:5px;width:497px;flex:none}
  .right{display:flex;flex-direction:column;gap:5px;flex:1;min-width:0}
  .top{display:flex;gap:5px;flex:1;min-height:0}
  .task{display:flex;justify-content:flex-end;height:8px;flex:none;overflow:hidden;padding:3px 74px 0 0;background:linear-gradient(90deg,transparent 344px,#2f3c46 344px 392px,transparent 392px),linear-gradient(90deg,#20363f,#20364a 50%,#1a2846);color:#fff;font-size:12px;line-height:14px}
  .ink{position:absolute;left:0;top:0;width:1300px;height:480px;pointer-events:none}`;}
  html(){return `<ue-header></ue-header><ue-toolbar></ue-toolbar>
  <main><div class="left"><ue-components></ue-components><ue-my-blueprint></ue-my-blueprint></div>
  <div class="right"><div class="top"><ue-graph></ue-graph><ue-details></ue-details></div><ue-results></ue-results></div></main>
  <ue-status></ue-status><div class="task">15:26</div>
  <svg class="ink" viewBox="0 0 1300 480" aria-hidden="true"><rect x="21.500" y="207.500" width="478" height="43" rx="2" fill="none" stroke="#ff1e12" stroke-width="3"/><path d="M504 237.500L1274.500 451 1276 446.500 1289 459.500 1271 463.500 1273 458.500 504 239z" fill="#ff1e12"/></svg>`;}
});
</script>
</body>
</html>
